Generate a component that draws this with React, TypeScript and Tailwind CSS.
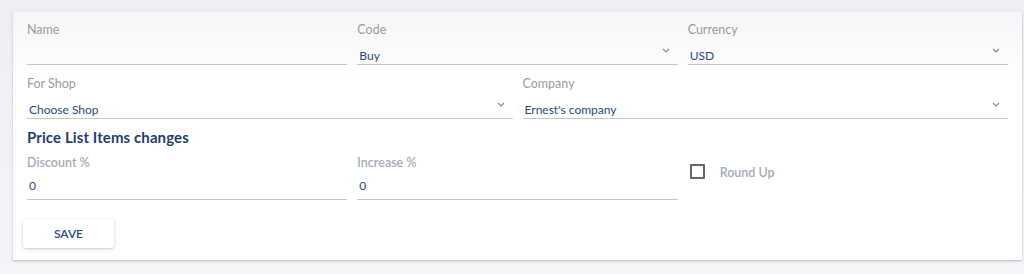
import React from "react";

const font = { fontFamily: "Lato, 'Open Sans', Arial, sans-serif" };

function Chevron() {
  return (
    <svg width="8" height="5" viewBox="0 0 8 5" className="absolute right-[8px] top-[11px]">
      <path d="M1 1 L4 4 L7 1" fill="none" stroke="#8a8a8a" strokeWidth="1.2" />
    </svg>
  );
}

function SelectField({ label, value, select = true }: { label: string; value?: string; select?: boolean }) {
  return (
    <div className="flex flex-col">
      <div className="text-[12.5px] leading-[14px] text-[#9b9b9b] h-[14px]">{label}</div>
      <div className="relative h-[28px] border-b border-[#c6c6c6] flex items-end pb-[1px] pl-[2px]">
        <span className="text-[12px] leading-[14px] text-[#284a80]">{value}</span>
        {select && <Chevron />}
      </div>
    </div>
  );
}

function TextField({ label, value }: { label: string; value: string }) {
  return (
    <div className="flex flex-col">
      <div className="text-[12.5px] leading-[14px] text-[#a3abbb] font-semibold h-[14px]">{label}</div>
      <div className="h-[30px] border-b border-[#c6c6c6] pt-[9px] pl-[2px]">
        <span className="text-[12px] leading-[14px] text-[#284a80] block">{value}</span>
      </div>
    </div>
  );
}

export default function App() {
  return (
    <div className="h-[274px] w-[1024px] bg-[linear-gradient(to_bottom,#eceef3,#f3f4f8)] pt-[12px] pl-[13px] pr-[2px]" style={font}>
      <div className="h-[248px] bg-[linear-gradient(to_bottom,#f5f6f8,#ffffff_70px)] shadow-[0_1px_2px_rgba(0,0,0,0.25)] px-[10px] pt-[11px]">
        <div className="px-[4px] grid grid-cols-3 gap-x-[10px]">
          <SelectField label="Name" select={false} />
          <SelectField label="Code" value="Buy" />
          <SelectField label="Currency" value="USD" />
        </div>
        <div className="px-[4px] mt-[12px] grid grid-cols-2 gap-x-[10px]">
          <SelectField label="For Shop" value="Choose Shop" />
          <SelectField label="Company" value="Ernest's company" />
        </div>
        <div className="px-[4px] mt-[9px] text-[15px] leading-[18px] font-bold text-[#1f3d72] tracking-[0.1px]">
          Price List Items changes
        </div>
        <div className="px-[4px] mt-[10px] grid grid-cols-3 gap-x-[10px]">
          <TextField label="Discount %" value="0" />
          <TextField label="Increase %" value="0" />
          <div className="flex items-start pt-[8px] pl-[2px]">
            <div className="w-[15px] h-[15px] border-2 border-[#666] rounded-[1px]" />
            <span className="ml-[15px] mt-[2px] text-[12.5px] leading-[14px] font-semibold text-[#a3abbb]">Round Up</span>
          </div>
        </div>
        <div className="mt-[19px]">
          <button className="w-[91px] h-[29px] bg-white rounded-[3px] shadow-[0_1px_3px_rgba(0,0,0,0.22)] text-[12px] font-semibold text-[#284a80]">
            SAVE
          </button>
        </div>
      </div>
    </div>
  );
}
